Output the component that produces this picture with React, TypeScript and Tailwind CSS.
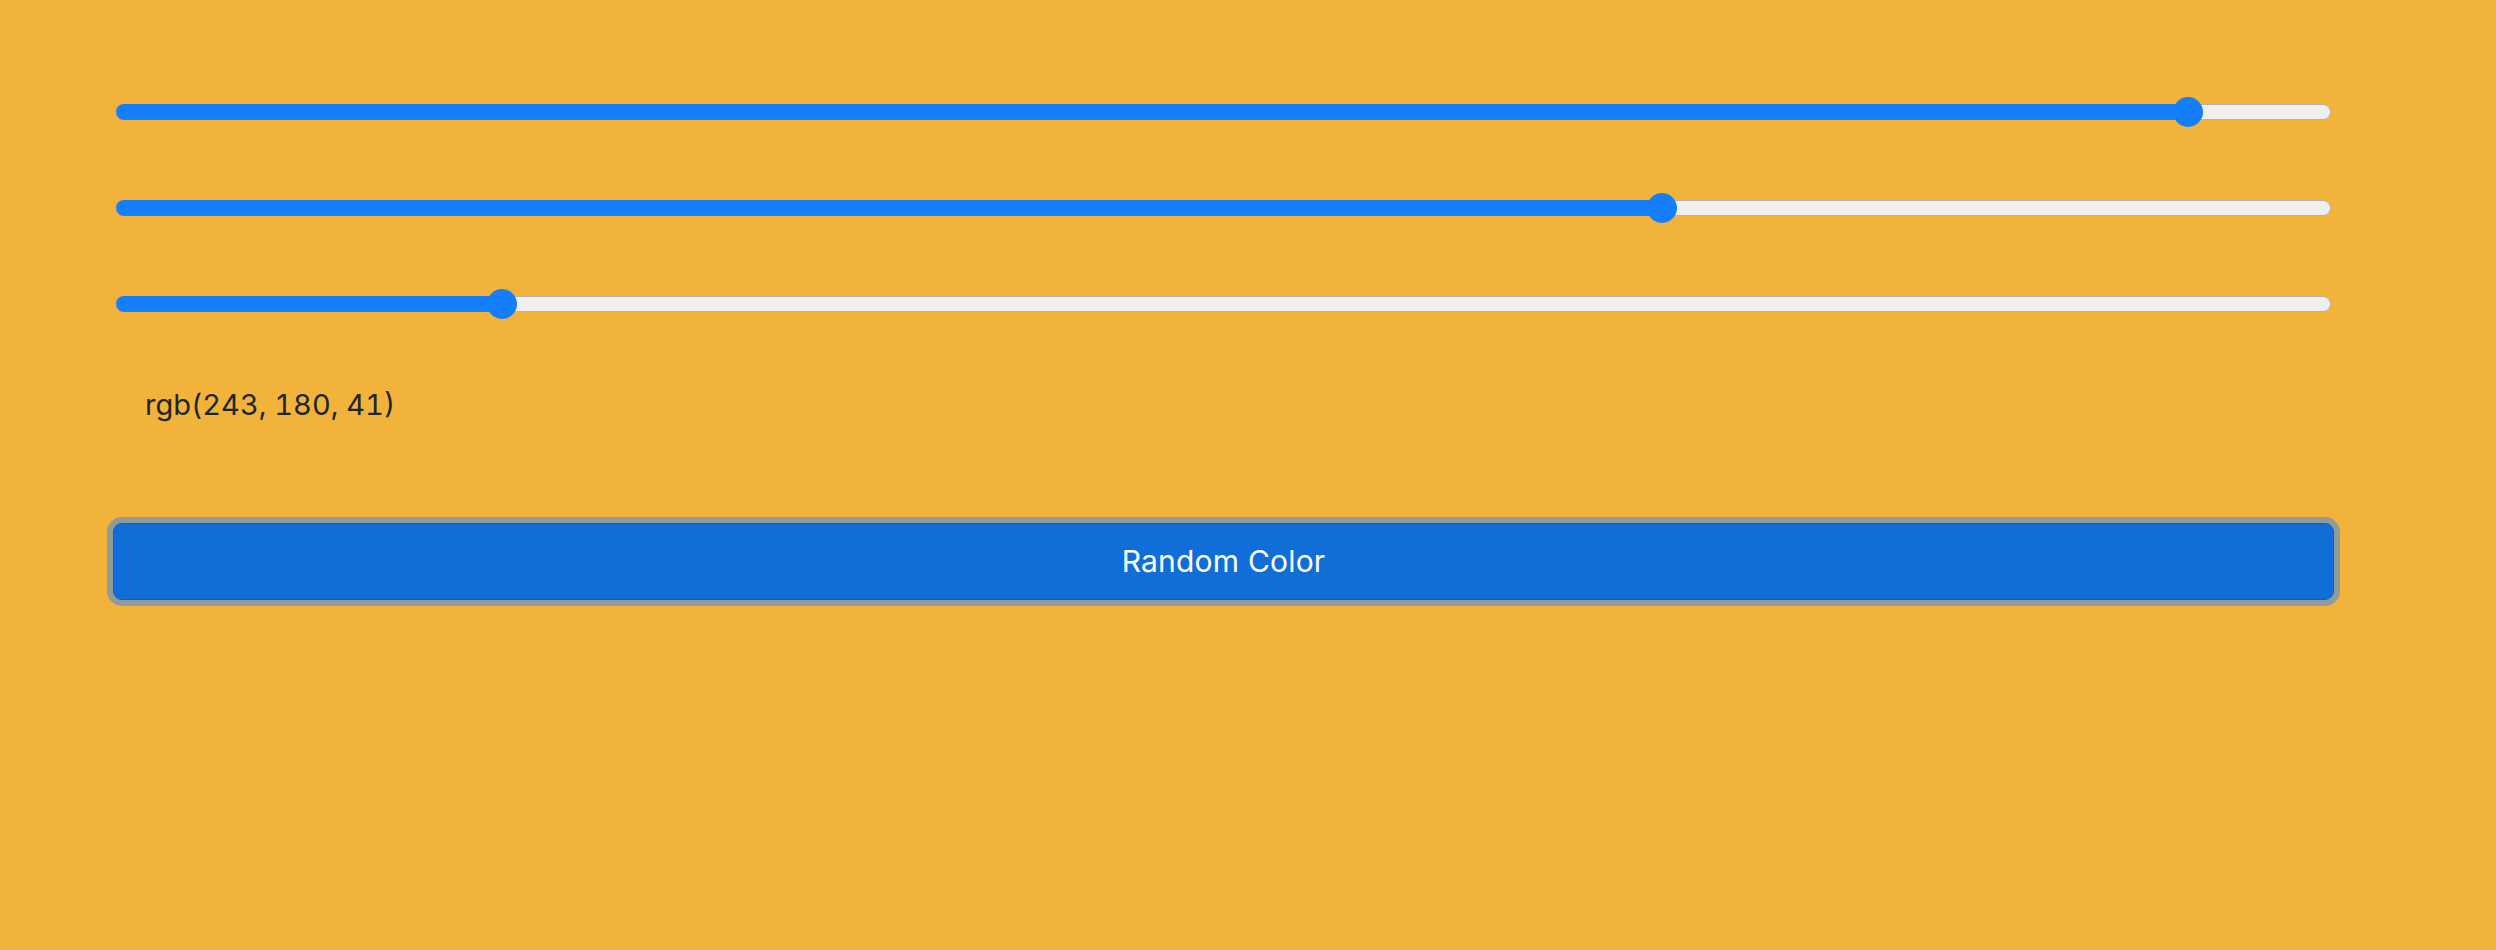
import React from "react";

const TRACK_W = 2215;
const THUMB = 30;
// thumb centre offsets measured along the track
const sliders = [0.9414, 0.7007, 0.1698];

function Slider({ frac }: { frac: number }) {
  const center = THUMB / 2 + frac * (TRACK_W - THUMB);
  return (
    <div className="relative mx-[3px] h-[30px] flex items-center">
      <div className="relative h-[16px] w-full rounded-full bg-[#efefef] border border-[#b3b3b3]">
        <div
          className="absolute left-[-1px] top-[-1px] h-[16px] rounded-full bg-[#157efb] border-b border-[#3b7bd2]"
          style={{ width: center }}
        />
      </div>
      <div
        className="absolute top-0 h-[30px] w-[30px] rounded-full bg-[#157efb]"
        style={{ left: center - THUMB / 2 }}
      />
    </div>
  );
}

export default function App() {
  return (
    <div
      className="min-h-screen w-full bg-[#f2b33a]"
      style={{ fontFamily: "Inter, 'Noto Sans', sans-serif" }}
    >
      <div className="ml-[113px] w-[2221px] pt-[97px] flex flex-col">
        <div className="flex flex-col gap-[66px]">
          {sliders.map((f, i) => (
            <Slider key={i} frac={f} />
          ))}
        </div>
        <div className="mt-[65px] pl-[32px] text-[29px] leading-[42px] text-[#212529] tabular-nums">
          rgb(243, 180, 41)
        </div>
        <button className="mt-[97px] h-[77px] w-full rounded-[9px] border border-[#0b5ccc] bg-[#116ed8] text-white text-[30px] tracking-[0.2px] shadow-[0_0_0_6px_rgba(49,132,253,0.5)]">
          Random Color
        </button>
      </div>
    </div>
  );
}
